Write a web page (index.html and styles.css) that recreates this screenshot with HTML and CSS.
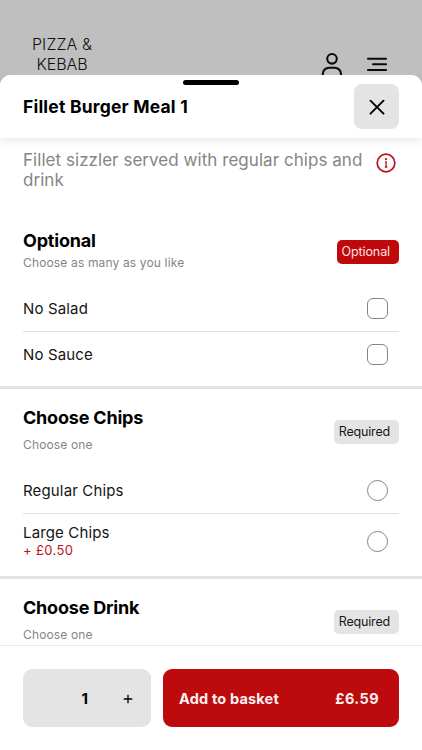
FILE: index.html
```html
<!DOCTYPE html>
<html lang="en">
<head>
<meta charset="utf-8">
<meta name="viewport" content="width=device-width, initial-scale=1">
<title>Fillet Burger Meal 1</title>
<link rel="stylesheet" href="styles.css">
</head>
<body>
<div class="screen">
  <header class="site-bar">
    <div class="brand"><span class="brand-top">PIZZA &amp;</span><span class="brand-bottom">KEBAB</span></div>
    <div class="site-icons">
      <svg width="24" height="30" viewBox="0 0 24 30" fill="none" stroke="#0a0a0a" stroke-width="2.1" stroke-linecap="round"><circle cx="12" cy="7.8" r="4.8"/><path d="M2.8 25v-2a6.3 6.3 0 0 1 6.3-6.3h5.6a6.3 6.3 0 0 1 6.3 6.3v2"/></svg>
      <svg width="22" height="18" viewBox="0 0 22 18" fill="none" stroke="#0a0a0a" stroke-width="2.1" stroke-linecap="round"><path d="M2 3.7h18M7 9.3h13M2 15h18"/></svg>
    </div>
  </header>
  <main class="sheet">
    <div class="sheet-head">
      <span class="handle"></span>
      <h1 class="title">Fillet Burger Meal 1</h1>
      <button class="close" aria-label="Close"><svg width="16" height="16" viewBox="0 0 16 16" fill="none" stroke="#000" stroke-width="1.9" stroke-linecap="round"><path d="M1.5 1.7l13 13M14.5 1.7l-13 13"/></svg></button>
    </div>
    <div class="content">
      <div class="about">
        <p class="description">Fillet sizzler served with regular chips and<br>drink</p>
        <svg class="info" width="20" height="20" viewBox="0 0 20 20" fill="none" stroke="#bd1218"><circle cx="10" cy="10" r="8.8" stroke-width="1.7"/><path d="M9 8.8h1.1v5.2M8.8 14h2.5" stroke-width="1.3"/><circle cx="10" cy="6.2" r="1.1" fill="#bd1218" stroke="none"/></svg>
      </div>
      <section class="group group-optional">
        <div class="group-head">
          <div><h2>Optional</h2><p class="hint">Choose as many as you like</p></div>
          <span class="tag tag-red">Optional</span>
        </div>
        <div class="option"><span class="name">No Salad</span><span class="box"></span></div>
        <div class="option last"><span class="name">No Sauce</span><span class="box"></span></div>
      </section>
      <section class="group group-chips">
        <div class="group-head">
          <div><h2>Choose Chips</h2><p class="hint">Choose one</p></div>
          <span class="tag">Required</span>
        </div>
        <div class="option"><span class="name">Regular Chips</span><span class="box round"></span></div>
        <div class="option last priced"><span class="name">Large Chips<span class="extra">+ £0.50</span></span><span class="box round"></span></div>
      </section>
      <section class="group group-drink">
        <div class="group-head">
          <div><h2>Choose Drink</h2><p class="hint">Choose one</p></div>
          <span class="tag">Required</span>
        </div>
      </section>
    </div>
    <footer class="actions">
      <div class="stepper"><span class="count">1</span><svg width="10" height="10" viewBox="0 0 10 10" stroke="#000" stroke-width="1.3"><path d="M.7 5h8.6M5 .7v8.6"/></svg></div>
      <button class="add"><span class="add-label">Add to basket</span><span class="total">£6.59</span></button>
    </footer>
  </main>
</div>
</body>
</html>
```
FILE: styles.css
```css
* { box-sizing: border-box; }
body { margin: 0; font-family: Inter, "Liberation Sans", sans-serif; color: #000; }
h1, h2, p { margin: 0; }
button { border: 0; font: inherit; color: inherit; }
svg { display: block; flex: none; }
.screen { height: 750px; overflow: hidden; background: #bfbfbf; display: flex; flex-direction: column; }
.site-bar { height: 75px; flex: none; overflow: hidden; display: flex; justify-content: space-between; align-items: flex-start; padding: 0 34px 0 31px; }
.brand { padding-top: 34px; width: 62px; display: flex; flex-direction: column; align-items: center; font-size: 16px; line-height: 20px; font-weight: 300; color: #111; white-space: nowrap; }
.brand-top { letter-spacing: .1px; }
.brand-bottom { letter-spacing: -.1px; }
.site-icons { display: flex; gap: 22px; padding-top: 51px; }
.site-icons svg + svg { margin-top: 4px; }

.sheet { flex: 1; min-height: 0; display: flex; flex-direction: column; background: #fff; border-radius: 11px 11px 0 0; }
.sheet-head { position: relative; z-index: 1; height: 63px; flex: none; display: flex; align-items: center; justify-content: space-between; padding: 0 23px; background: #fff; border-radius: 11px 11px 0 0; box-shadow: 0 3px 10px rgba(0, 0, 0, .09); clip-path: inset(0 0 -16px 0); }
.handle { position: absolute; top: 5px; left: 183px; width: 56px; height: 5px; border-radius: 3px; background: #000; }
.title { font-size: 17.5px; line-height: 22px; font-weight: 700; letter-spacing: .2px; }
.close { width: 45px; height: 45px; padding: 0; border-radius: 8px; background: #e4e4e4; display: flex; align-items: center; justify-content: center; }

.content { flex: 1; min-height: 0; overflow: hidden; }
.about { display: flex; justify-content: space-between; padding: 12px 26px 0 23px; height: 80px; }
.description { font-size: 17px; line-height: 20px; letter-spacing: .045px; color: #858585; white-space: nowrap; }
.info { margin: 3px 0 0; }
.group { padding: 0 23px; }
.group + .group { border-top: 3px solid #e3e3e3; }
.group-head { display: flex; justify-content: space-between; align-items: center; }
h2 { font-size: 18px; line-height: 24px; font-weight: 700; letter-spacing: -.2px; }
.hint { font-size: 12px; line-height: 16px; letter-spacing: .15px; color: #858585; }
.tag { height: 24px; padding: 0 9px 0 5px; border-radius: 5px; background: #e4e4e4; color: #181818; font-size: 12.5px; line-height: 24px; letter-spacing: -.17px; }
.tag-red { background: #bf080a; color: #ffe3e3; letter-spacing: -.1px; }
.group-optional { height: 168px; padding-top: 11px; }
.group-optional .hint { margin-top: 2px; }
.group-optional .group-head { height: 57px; align-items: flex-start; }
.group-optional .tag { margin-top: 11px; }
.group-optional .option.last { height: 45px; }
.group-chips { height: 190px; padding-top: 17px; }
.group-drink { padding-top: 17px; }
.group-chips .hint, .group-drink .hint { margin-top: 7px; }
.group-chips .group-head, .group-drink .group-head { height: 62px; align-items: flex-start; }
.group-chips .tag, .group-drink .tag { margin-top: 14px; }
.option { height: 46px; display: flex; align-items: center; justify-content: space-between; border-bottom: 1px solid #e2e2e2; padding-right: 11px; }
.option.last { border: 0; }
.group-chips .option.priced { height: 54px; }
.name { font-size: 15px; line-height: 18px; letter-spacing: .15px; color: #151515; }
.extra { display: block; font-size: 13px; line-height: 17px; letter-spacing: .35px; color: #bd1218; }
.box { width: 21px; height: 21px; border: 1px solid #858585; border-radius: 6px; }
.round { border-radius: 50%; }
.actions { height: 105px; flex: none; display: flex; gap: 12px; padding: 23px 23px 0; border-top: 1px solid #e8e8e8; background: #fff; }
.stepper { width: 128px; height: 58px; border-radius: 9px; background: #e4e4e4; display: flex; align-items: center; justify-content: flex-end; gap: 35px; padding-right: 18px; }
.stepper svg { margin-top: 1px; }
.count { font-size: 15px; font-weight: 700; }
.add { flex: 1; height: 58px; border-radius: 9px; padding: 0 20px 0 16px; background: #bd0a0c; color: #fff1f1; display: flex; align-items: center; justify-content: space-between; font-size: 14.5px; font-weight: 700; letter-spacing: .18px; }
.total { letter-spacing: .4px; }
```
